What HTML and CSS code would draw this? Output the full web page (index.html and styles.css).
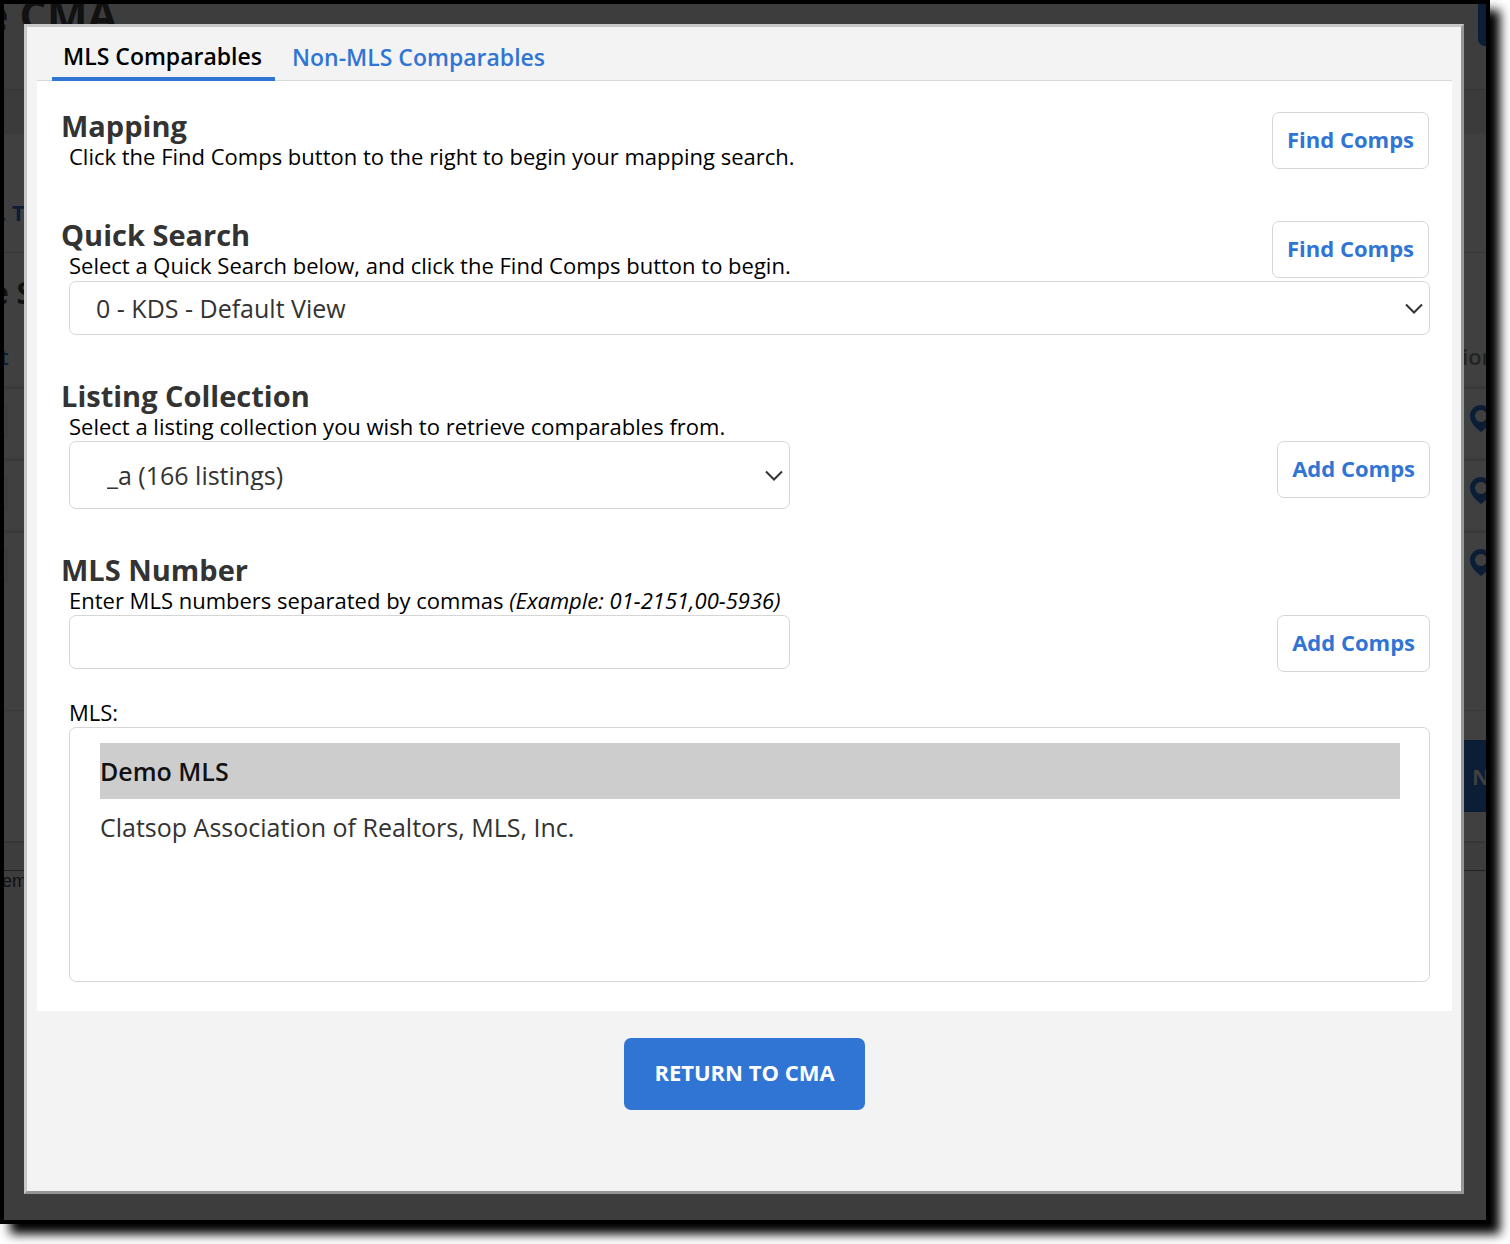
FILE: index.html
```html
<!DOCTYPE html>
<html lang="en">
<head>
<meta charset="utf-8">
<title>Comparables</title>
<link rel="stylesheet" href="styles.css">
</head>
<body>
<div class="frame">
  <div class="page" aria-hidden="true">
    <div class="page-header"><span class="page-title">e CMA</span><span class="page-cta"></span></div>
    <div class="page-band"></div>
    <div class="page-tabs"><span>. T</span></div>
    <div class="page-subtitle">e S</div>
    <div class="page-columns"><span class="sort">t</span><span>ion</span></div>
    <div class="page-row"><span class="stub"></span><svg class="pin" viewBox="0 0 22 27"><path fill-rule="evenodd" d="M11 0A11 11 0 0 0 0 11C0 18 6 23 11 27C16 23 22 18 22 11A11 11 0 0 0 11 0ZM11 5A6 6 0 1 1 11 17A6 6 0 1 1 11 5Z"/></svg></div>
    <div class="page-row"><span class="stub"></span><svg class="pin" viewBox="0 0 22 27"><path fill-rule="evenodd" d="M11 0A11 11 0 0 0 0 11C0 18 6 23 11 27C16 23 22 18 22 11A11 11 0 0 0 11 0ZM11 5A6 6 0 1 1 11 17A6 6 0 1 1 11 5Z"/></svg></div>
    <div class="page-row page-row-last"><span class="stub"></span><svg class="pin" viewBox="0 0 22 27"><path fill-rule="evenodd" d="M11 0A11 11 0 0 0 0 11C0 18 6 23 11 27C16 23 22 18 22 11A11 11 0 0 0 11 0ZM11 5A6 6 0 1 1 11 17A6 6 0 1 1 11 5Z"/></svg></div>
    <div class="page-actions"><span class="page-next">N</span></div>
    <div class="page-gap"></div>
    <div class="page-footer">em</div>
  </div>

  <main class="modal">
    <nav class="tabs">
      <a class="tab tab-active" href="#mls">MLS Comparables</a>
      <a class="tab" href="#non-mls">Non-MLS Comparables</a>
    </nav>
    <div class="panel" id="mls">
      <section class="section">
        <div class="head head-alone">
          <div>
            <h2>Mapping</h2>
            <p class="hint">Click the Find Comps button to the right to begin your mapping search.</p>
          </div>
          <button class="btn" type="button">Find Comps</button>
        </div>
      </section>

      <section class="section">
        <div class="head">
          <div>
            <h2>Quick Search</h2>
            <label class="hint" for="quick">Select a Quick Search below, and click the Find Comps button to begin.</label>
          </div>
          <button class="btn" type="button">Find Comps</button>
        </div>
        <div class="select">
          <select class="field" id="quick"><option>0 - KDS - Default View</option></select>
          <svg class="chevron" viewBox="0 0 18 11"><path d="M1 1.5L9 9.5L17 1.5"/></svg>
        </div>
      </section>

      <section class="section">
        <h2>Listing Collection</h2>
        <label class="hint" for="collection">Select a listing collection you wish to retrieve comparables from.</label>
        <div class="row">
          <div class="select half">
            <select class="field field-tall" id="collection"><option>_a (166 listings)</option></select>
            <svg class="chevron" viewBox="0 0 18 11"><path d="M1 1.5L9 9.5L17 1.5"/></svg>
          </div>
          <button class="btn" type="button">Add Comps</button>
        </div>
      </section>

      <section class="section">
        <h2>MLS Number</h2>
        <label class="hint" for="numbers">Enter MLS numbers separated by commas <em>(Example: 01-2151,00-5936)</em></label>
        <div class="row">
          <div class="half"><input class="field" id="numbers" type="text"></div>
          <button class="btn" type="button">Add Comps</button>
        </div>
        <label class="hint mls-label" for="mls-list">MLS:</label>
        <select class="listbox" id="mls-list" multiple size="4">
          <option selected>Demo MLS</option>
          <option>Clatsop Association of Realtors, MLS, Inc.</option>
        </select>
      </section>
    </div>
    <div class="footer">
      <button class="btn-primary" type="button">RETURN TO CMA</button>
    </div>
  </main>
</div>
</body>
</html>
```

FILE: styles.css
```css
* { box-sizing: border-box; }

body {
  margin: 0;
  padding: 0 20px 20px 0;
  background: #fff;
  color: #000;
  font-family: "Open Sans", "Noto Sans", sans-serif;
  font-size: 22px;
  line-height: 30px;
}

h2, p { margin: 0; }

button, select, input { font: inherit; }

.frame {
  position: relative;
  overflow: hidden;
  padding: 20px 22px 26px 20px;
  border: 4px solid #000;
  background: #3d3d3d;
  box-shadow: 10px 10px 10px #000;
}

/* Dimmed page behind the dialog */
.page {
  position: absolute;
  inset: 0;
  display: flex;
  flex-direction: column;
  color: #111;
}

.page-header {
  display: flex;
  justify-content: space-between;
  height: 86px;
  border-bottom: 1px solid #353535;
  overflow: hidden;
}

.page-title {
  margin: -13px 0 0 -21px;
  font-size: 43px;
  line-height: 48px;
  font-weight: 700;
}

.page-cta {
  width: 8px;
  height: 42px;
  border-radius: 0 0 0 7px;
  background: #0c1d36;
}

.page-band { height: 44px; background: #3b3b3b; }

.page-tabs {
  height: 119px;
  padding-top: 63px;
  border-bottom: 1px solid #353535;
  background: #404040;
  color: #0c1d36;
  font-weight: 700;
}

.page-tabs span { margin-left: -4px; }

.page-subtitle {
  height: 80px;
  padding-top: 25px;
  text-indent: -13px;
  background: #404040;
  font-size: 30px;
  font-weight: 700;
}

.page-columns {
  display: flex;
  justify-content: space-between;
  height: 56px;
  padding-top: 8px;
  border-bottom: 3px solid #393939;
  background: #404040;
  color: #222;
  font-weight: 600;
}

.page-columns span { width: 24px; overflow: hidden; }
.page-columns .sort { text-indent: -4px; color: #0c1d36; }

.page-row {
  display: flex;
  justify-content: space-between;
  align-items: flex-start;
  height: 72px;
  padding-top: 16px;
  border-bottom: 3px solid #393939;
  background: #404040;
  overflow: hidden;
}

.page-row-last { height: 178px; border-bottom-width: 1px; }

.stub {
  width: 3px;
  height: 33px;
  border: 1px solid #383838;
  border-left: 0;
  border-radius: 0 4px 4px 0;
}

.pin {
  flex: none;
  width: 22px;
  height: 27px;
  margin-right: -6px;
  fill: #0c1d36;
}

.page-actions {
  display: flex;
  justify-content: flex-end;
  height: 132px;
  padding-top: 29px;
  border-bottom: 2px solid #363636;
  background: #404040;
}

.page-next {
  width: 22px;
  height: 72px;
  padding-left: 8px;
  overflow: hidden;
  background: #0c1d36;
  color: #404040;
  line-height: 72px;
  font-weight: 700;
}

.page-gap { height: 27px; }

.page-footer {
  border-top: 1px solid #222;
  text-indent: -2px;
  font-family: "Liberation Sans", sans-serif;
  font-size: 18px;
  line-height: 20px;
}

/* Dialog */
.modal {
  position: relative;
  padding: 0 9px 0 10px;
  border: 3px solid;
  border-color: #c9c8c8 #959796 #959796 #c9c8c8;
  background: #f3f3f3;
}

.tabs {
  display: flex;
  gap: 6px;
  height: 54px;
  padding-left: 15px;
  border-bottom: 1px solid #d8d8d8;
}

.tab {
  height: 54px;
  padding: 14px 13px 0 11px;
  color: #3175d4;
  font-size: 23px;
  line-height: 32px;
  font-weight: 600;
  text-decoration: none;
}

.tab-active {
  padding-top: 13px;
  border-bottom: 4px solid #3175d4;
  color: #000;
}

.panel {
  display: flex;
  flex-direction: column;
  gap: 46px;
  padding: 30px 22px 29px 24px;
  background: #fff;
}

h2 {
  color: #333;
  font-size: 29px;
  line-height: 30px;
  font-weight: 700;
}

.hint { display: block; padding-left: 8px; }

.head {
  display: flex;
  justify-content: space-between;
  align-items: flex-start;
  height: 61px;
  padding: 1px 1px 0 0;
}

.head > div { margin-top: -1px; }
.head-alone { height: 63px; }

.row {
  display: flex;
  justify-content: space-between;
  align-items: flex-start;
  padding-left: 8px;
}

.half { width: 53%; }

.select { position: relative; }
.head + .select { margin-left: 8px; }

.field {
  display: block;
  width: 100%;
  height: 54px;
  padding: 0 26px;
  border: 1px solid #d6d6d6;
  border-radius: 7px;
  background: #fff;
  color: #333;
  font-size: 25px;
  appearance: none;
}

.field-tall { height: 68px; padding-left: 37px; }

.chevron {
  position: absolute;
  top: 50%;
  right: 7px;
  width: 18px;
  height: 11px;
  margin-top: -5px;
  fill: none;
  stroke: #333;
  stroke-width: 2;
  pointer-events: none;
}

.btn {
  height: 57px;
  padding: 0 14px 3px;
  border: 1px solid #d6d6d6;
  border-radius: 7px;
  background: #fff;
  color: #3175d4;
  font-weight: 700;
}

.mls-label { margin-top: 25px; }

.listbox {
  display: block;
  width: calc(100% - 8px);
  height: 255px;
  margin-left: 8px;
  padding: 15px 29px 15px 30px;
  border: 1px solid #d6d6d6;
  border-radius: 7px;
  background: #fff;
  color: #333;
  font-size: 25px;
  outline: 0;
  overflow: hidden;
  appearance: none;
}

.listbox option {
  height: 56px;
  padding: 11px 0;
}

.listbox option:checked {
  background: #cdcdcd linear-gradient(#cdcdcd, #cdcdcd);
  color: #111;
  font-weight: 600;
}

.footer {
  display: flex;
  justify-content: center;
  padding: 27px 0 81px;
}

.btn-primary {
  height: 72px;
  padding: 0 30px 4px;
  border: 0;
  border-radius: 7px;
  background: #3175d4;
  color: #fff;
  font-weight: 700;
}
```
